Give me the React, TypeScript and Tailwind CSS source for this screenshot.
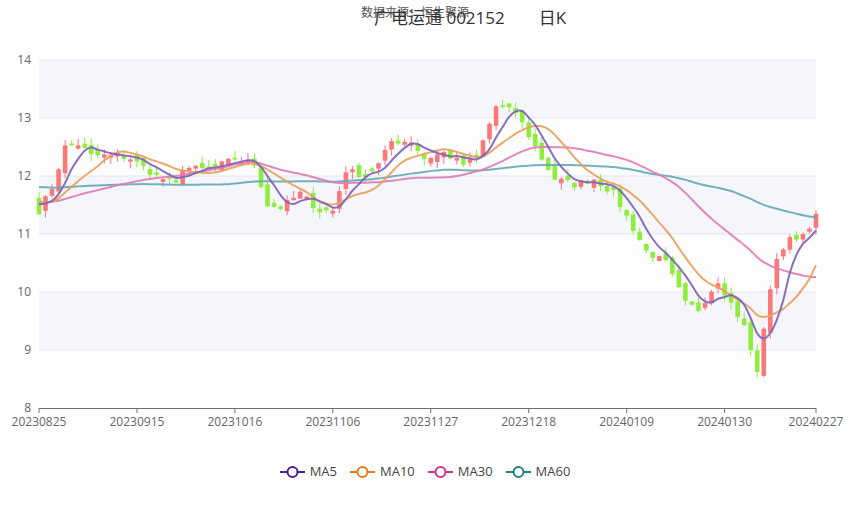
import React from "react";

const keys: [number, number][] = [
  [0, 11.4], [2, 11.8], [4, 12.5], [6, 12.55], [8, 12.35], [12, 12.35], [14, 12.3], [18, 12.0], [21, 11.85], [22, 12.15],
  [26, 12.1], [30, 12.3], [33, 12.2], [35, 11.5], [37, 11.45], [40, 11.7], [43, 11.4], [45, 11.4], [47, 12.1], [50, 12.0],
  [52, 12.2], [54, 12.6], [57, 12.6], [59, 12.3], [62, 12.4], [65, 12.2], [67, 12.3], [70, 13.2], [73, 13.1], [75, 12.7],
  [77, 12.3], [79, 11.95], [82, 11.85], [85, 11.95], [88, 11.7], [90, 11.3], [93, 10.7], [96, 10.5], [99, 9.8], [101, 9.7],
  [104, 10.2], [106, 9.8], [108, 9.4], [110, 8.6], [111, 9.4], [113, 10.6], [115, 10.9], [117, 11.0], [119, 11.3],
];

let seed = 7;
const rnd = () => {
  seed = (seed * 16807) % 2147483647;
  return seed / 2147483647;
};

const N = 120;
const closes: number[] = [];
for (let i = 0; i < N; i++) {
  let k = 0;
  while (k < keys.length - 1 && keys[k + 1][0] < i) k++;
  const [a, va] = keys[k];
  const [b, vb] = keys[Math.min(k + 1, keys.length - 1)];
  const v = b === a ? va : va + ((vb - va) * (i - a)) / (b - a);
  closes.push(v + (rnd() - 0.5) * 0.12);
}
const candles = closes.map((c, i) => {
  const prev = i === 0 ? 11.6 : closes[i - 1];
  let o = prev + (rnd() - 0.5) * 0.15;
  if (Math.abs(o - c) < 0.03) o = c + (rnd() > 0.5 ? 0.05 : -0.05);
  const h = Math.max(o, c) + rnd() * 0.12;
  const l = Math.min(o, c) - rnd() * 0.12;
  return { o, c, h, l };
});

const prefix: number[] = [];
for (let i = 0; i < 30; i++) prefix.push(12.1);
for (let i = 0; i < 30; i++) prefix.push(11.55);
const all = [...prefix, ...closes];
const ma = (n: number) =>
  closes.map((_, i) => {
    const j = i + prefix.length;
    let s = 0;
    for (let k = j - n + 1; k <= j; k++) s += all[k];
    return s / n;
  });

const X0 = 39, X1 = 816, Y0 = 60, PX = 58;
const xs = (i: number) => X0 + (i * (X1 - X0)) / (N - 1);
const ys = (v: number) => Y0 + (14 - v) * PX;

const smooth = (vals: number[]) => {
  const p = vals.map((v, i) => [xs(i), ys(v)]);
  let d = `M${p[0][0]},${p[0][1]}`;
  for (let i = 0; i < p.length - 1; i++) {
    const p0 = p[i - 1] || p[i], p1 = p[i], p2 = p[i + 1], p3 = p[i + 2] || p2;
    const c1 = [p1[0] + (p2[0] - p0[0]) / 6, p1[1] + (p2[1] - p0[1]) / 6];
    const c2 = [p2[0] - (p3[0] - p1[0]) / 6, p2[1] - (p3[1] - p1[1]) / 6];
    d += ` C${c1[0]},${c1[1]} ${c2[0]},${c2[1]} ${p2[0]},${p2[1]}`;
  }
  return d;
};

const lines = [
  { v: ma(60), c: "#64aab2" },
  { v: ma(30), c: "#e07ab8" },
  { v: ma(10), c: "#e8a05c" },
  { v: ma(5), c: "#7d60b8" },
];

const dates = ["20230825", "20230915", "20231016", "20231106", "20231127", "20231218", "20240109", "20240130", "20240227"];
const dateIdx = [0, 15, 30, 45, 60, 75, 90, 105, 119];

const legend = [
  { n: "MA5", c: "#4a1d96" },
  { n: "MA10", c: "#e07b20" },
  { n: "MA30", c: "#d4308c" },
  { n: "MA60", c: "#1f8282" },
];

export default function App() {
  return (
    <div className="relative w-[850px] h-[518px] bg-white" style={{ fontFamily: '"Open Sans", "Noto Sans CJK SC", sans-serif' }}>
      <div className="absolute left-[361px] top-[4px] text-[12px] text-[#555]">数据来源：恒生聚源</div>
      <div className="absolute left-[374px] top-[5px] flex gap-[34px] text-[17px] text-[#333]">
        <span>广电运通 002152</span>
        <span>日K</span>
      </div>
      <svg width="850" height="450" className="block">
        {[14, 13, 12, 11, 10, 9].map((v, i) => (
          <rect key={v} x={X0} y={ys(v)} width={X1 - X0} height={PX} fill={i % 2 === 0 ? "#f5f6fb" : "#fdfdfe"} />
        ))}
        {[14, 13, 12, 11, 10, 9].map((v) => (
          <line key={v} x1={X0} x2={X1} y1={ys(v)} y2={ys(v)} stroke="#e3e6f0" />
        ))}
        {[14, 13, 12, 11, 10, 9, 8].map((v) => (
          <text key={v} x={31} y={ys(v) + 4} textAnchor="end" fontSize="12" fill="#666">{v}</text>
        ))}
        <line x1={X0} x2={X1} y1={408.5} y2={408.5} stroke="#6e7079" />
        {dateIdx.map((d, k) => (
          <g key={d}>
            <line x1={xs(d)} x2={xs(d)} y1={408} y2={413} stroke="#6e7079" />
            <text x={xs(d)} y={426} textAnchor="middle" fontSize="12" fill="#666">{dates[k]}</text>
          </g>
        ))}
        {candles.map((c, i) => {
          const up = c.c >= c.o;
          const col = up ? "#fa7878" : "#8fee3c";
          const x = xs(i);
          const top = ys(Math.max(c.o, c.c));
          const bot = ys(Math.min(c.o, c.c));
          return (
            <g key={i}>
              <line x1={x} x2={x} y1={ys(c.h)} y2={ys(c.l)} stroke={col} strokeWidth="1" />
              <rect x={x - 2.3} y={top} width={4.6} height={Math.max(1, bot - top)} fill={col} />
            </g>
          );
        })}
        {lines.map((l) => (
          <path key={l.c} d={smooth(l.v)} fill="none" stroke={l.c} strokeWidth="2" strokeOpacity="0.9" />
        ))}
      </svg>
      <div className="flex justify-center gap-[13px] mt-[12px] text-[13px] text-[#444]">
        {legend.map((l) => (
          <div key={l.n} className="flex items-center gap-[5px]">
            <svg width="25" height="14">
              <line x1="0" x2="25" y1="7" y2="7" stroke={l.c} strokeWidth="2" />
              <circle cx="12.5" cy="7" r="5" fill="white" stroke={l.c} strokeWidth="2" />
            </svg>
            <span>{l.n}</span>
          </div>
        ))}
      </div>
    </div>
  );
}
